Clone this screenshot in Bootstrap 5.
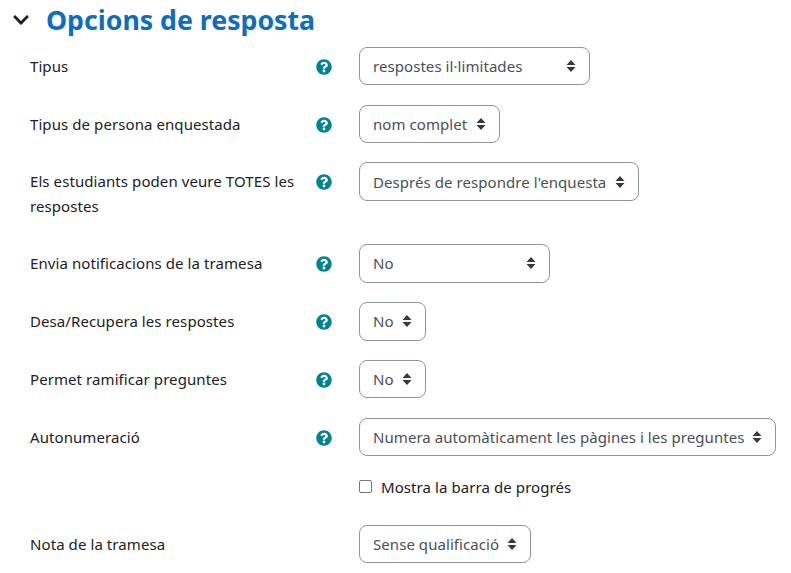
<!DOCTYPE html>
<html lang="ca">
<head>
<meta charset="utf-8">
<title>Opcions de resposta</title>
<link rel="stylesheet" href="https://cdn.jsdelivr.net/npm/bootstrap@5.3.0/dist/css/bootstrap.min.css">
<style>
body{font-family:"Noto Sans","Open Sans",sans-serif;font-size:15px;color:#1d2125;background:#fff;overflow:hidden;font-feature-settings:"locl" 0}
.sheet{padding:0 15px 0 13px}
.sec-head{height:46.700px;padding-bottom:6px}
.sec-chev{width:16px;height:18px;color:#1d2125;margin-right:17px;flex:none}
.sec-title{font-size:26.7px;font-weight:700;color:#0f6cbf;margin:0;line-height:38px;font-family:"Noto Sans",sans-serif}
.frow{margin-bottom:19.35px;padding-left:17px}
.flabel{width:275px;flex:none;line-height:25px;padding:7px 0 5.500px;margin:0;letter-spacing:.08px}
.fhelp{width:54px;flex:none;padding:12px 0 0 11px}
.fhelp svg{width:16px;height:16px;display:block;color:#008196}
.fsel.form-select{height:38.500px;font-size:15px;line-height:22px;padding:7px 24px 7px 13px;color:#495057;border:1px solid #8f959e;border-radius:8px;font-family:inherit;font-feature-settings:"locl" 0;letter-spacing:.06px;background-size:10px 12px;background-position:right 13px center;background-image:url("data:image/svg+xml,%3Csvg xmlns='http://www.w3.org/2000/svg' viewBox='0 0 10 12'%3E%3Cpath fill='%23343a40' d='M5 0l4.500 5H.5zM5 12L.5 7h9z'/%3E%3C/svg%3E")}
.w-a{width:231px}.w-b{width:141px}.w-c{width:280px}.w-d{width:191px}.w-e{width:67px}.w-f{width:417px}.w-g{width:172px}
.chk-row{padding-left:346px;height:50px;margin-top:-1px}
.chk-row .form-check-input{width:13px;height:13px;margin:0 9px 0 0;border:1px solid #767676;border-radius:2px;flex:none}
.chk-row label{line-height:24px;letter-spacing:.08px}
</style>
</head>
<body>
<div class="sheet">
  <div class="sec-head d-flex align-items-center">
    <svg class="sec-chev" viewBox="0 0 448 512" aria-hidden="true"><path fill="currentColor" d="M207.029 381.476L12.686 187.132c-9.373-9.373-9.373-24.569 0-33.941l22.667-22.667c9.357-9.357 24.522-9.375 33.901-.04L224 284.505l154.745-154.021c9.379-9.335 24.544-9.317 33.901.04l22.667 22.667c9.373 9.373 9.373 24.569 0 33.941L240.971 381.476c-9.373 9.372-24.569 9.372-33.942 0z"/></svg>
    <h3 class="sec-title">Opcions de resposta</h3>
  </div>

  <div class="frow d-flex">
    <label class="flabel">Tipus</label>
    <span class="fhelp"><svg viewBox="0 0 512 512"><use href="#q"/></svg></span>
    <select class="form-select fsel w-a"><option>respostes il·limitades</option></select>
  </div>
  <div class="frow d-flex">
    <label class="flabel">Tipus de persona enquestada</label>
    <span class="fhelp"><svg viewBox="0 0 512 512"><use href="#q"/></svg></span>
    <select class="form-select fsel w-b"><option>nom complet</option></select>
  </div>
  <div class="frow d-flex">
    <label class="flabel">Els estudiants poden veure TOTES les respostes</label>
    <span class="fhelp"><svg viewBox="0 0 512 512"><use href="#q"/></svg></span>
    <select class="form-select fsel w-c"><option>Després de respondre l'enquesta</option></select>
  </div>
  <div class="frow d-flex">
    <label class="flabel">Envia notificacions de la tramesa</label>
    <span class="fhelp"><svg viewBox="0 0 512 512"><use href="#q"/></svg></span>
    <select class="form-select fsel w-d"><option>No</option></select>
  </div>
  <div class="frow d-flex">
    <label class="flabel">Desa/Recupera les respostes</label>
    <span class="fhelp"><svg viewBox="0 0 512 512"><use href="#q"/></svg></span>
    <select class="form-select fsel w-e"><option>No</option></select>
  </div>
  <div class="frow d-flex">
    <label class="flabel">Permet ramificar preguntes</label>
    <span class="fhelp"><svg viewBox="0 0 512 512"><use href="#q"/></svg></span>
    <select class="form-select fsel w-e"><option>No</option></select>
  </div>
  <div class="frow d-flex">
    <label class="flabel">Autonumeració</label>
    <span class="fhelp"><svg viewBox="0 0 512 512"><use href="#q"/></svg></span>
    <select class="form-select fsel w-f"><option>Numera automàticament les pàgines i les preguntes</option></select>
  </div>
  <div class="chk-row d-flex align-items-start">
    <span class="d-flex align-items-center">
      <input class="form-check-input" type="checkbox" id="mb">
      <label for="mb">Mostra la barra de progrés</label>
    </span>
  </div>
  <div class="frow d-flex">
    <label class="flabel">Nota de la tramesa</label>
    <span class="fhelp"></span>
    <select class="form-select fsel w-g"><option>Sense qualificació</option></select>
  </div>
</div>
<svg width="0" height="0" class="position-absolute"><defs><path id="q" fill="currentColor" d="M504 256c0 136.997-111.043 248-248 248S8 392.997 8 256C8 119.083 119.043 8 256 8s248 111.083 248 248zM262.655 90c-54.497 0-89.255 22.957-116.549 63.758-3.536 5.286-2.353 12.415 2.715 16.258l34.699 26.31c5.205 3.947 12.621 3.008 16.665-2.122 17.864-22.658 30.113-35.797 57.303-35.797 20.429 0 45.698 13.148 45.698 32.958 0 14.976-12.363 22.667-32.534 33.976C247.128 238.528 216 254.941 216 296v4c0 6.627 5.373 12 12 12h56c6.627 0 12-5.373 12-12v-1.333c0-28.462 83.186-29.647 83.186-106.667 0-58.002-60.165-102-116.531-102zM256 338c-25.365 0-46 20.635-46 46 0 25.364 20.635 46 46 46s46-20.636 46-46c0-25.365-20.635-46-46-46z"/></defs></svg>
</body>
</html>
